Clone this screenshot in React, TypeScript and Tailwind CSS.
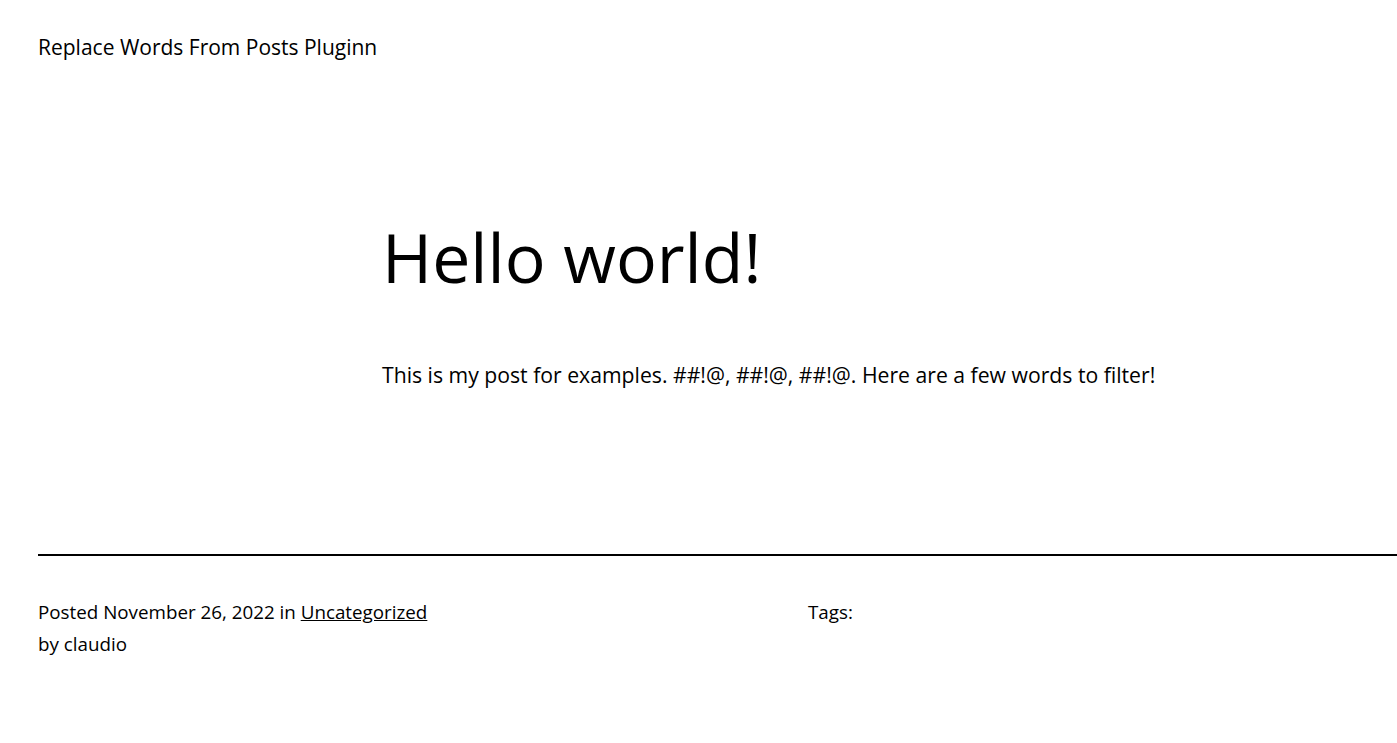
export default function App() {
  return (
    <div className="min-h-[743px] bg-white text-black" style={{ fontFamily: "'Open Sans', Lato, sans-serif" }}>
      <header className="pl-[38px] pt-[33px]">
        <p className="text-[21px] leading-[28px]">Replace Words From Posts Pluginn</p>
      </header>
      <main className="pl-[382px] pt-[158px]">
        <h1 className="text-[68px] leading-[76px] font-normal">Hello world!</h1>
        <p className="mt-[65px] text-[21.2px] leading-[30px]">
          This is my post for examples. ##!@, ##!@, ##!@. Here are a few words to filter!
        </p>
      </main>
      <div className="ml-[38px] mt-[164px] h-[2px] bg-black" />
      <footer className="grid grid-cols-[770px_1fr] pl-[38px] pt-[40px] text-[18.8px] leading-[32px]">
        <div>
          <p>
            Posted November 26, 2022 in <a className="underline" href="#">Uncategorized</a>
          </p>
          <p>by claudio</p>
        </div>
        <div>Tags:</div>
      </footer>
    </div>
  );
}
